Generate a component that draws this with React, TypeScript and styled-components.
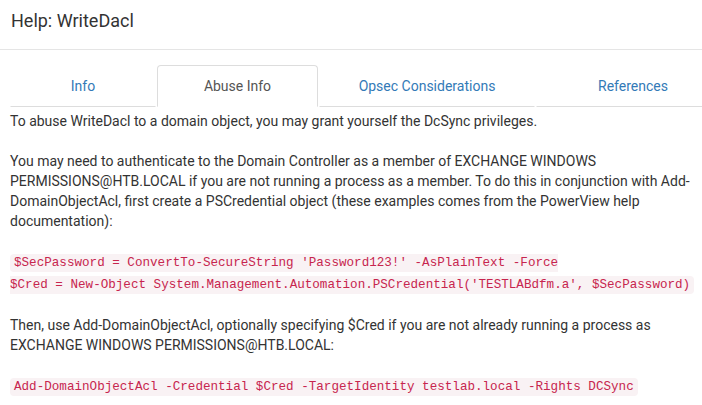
import React from 'react'
import styled, { createGlobalStyle } from 'styled-components'

const GlobalStyle = createGlobalStyle`
  html, body {
    margin: 0;
    padding: 0;
    background: #fff;
    overflow: hidden;
  }
  body {
    font-family: Roboto, "Liberation Sans", sans-serif;
    font-size: 14px;
    line-height: 1.42857143;
    color: #333;
  }
`

const Modal = styled.div`
  width: 750px;
  margin: -7px 0 0 -5px;
  background: #fff;
`

const Header = styled.div`
  padding: 15px 16px;
  border-bottom: 1px solid #e5e5e5;
`

const Title = styled.h4`
  margin: 0;
  font-size: 18px;
  font-weight: 400;
  line-height: 1.42857143;
  color: #333;
`

const Body = styled.div`
  padding: 15px;
`

const Tabs = styled.ul`
  display: flex;
  margin: 0;
  padding: 0;
  list-style: none;
`

const Tab = styled.li<{ $width: number; $active?: boolean }>`
  flex: 0 0 ${({ $width }) => $width}px;
  margin-right: 1px;
  text-align: center;

  a {
    display: block;
    padding: 10px 15px;
    line-height: 20px;
    text-decoration: none;
    border: 1px solid ${({ $active }) => ($active ? '#ddd' : 'transparent')};
    border-bottom-color: ${({ $active }) => ($active ? '#fff' : '#ddd')};
    border-radius: 4px 4px 0 0;
    color: ${({ $active }) => ($active ? '#555' : '#337ab7')};
    background: #fff;
  }
`

const Content = styled.div`
  width: 692px;
  padding-top: 4px;
`

const Code = styled.code`
  padding: 2px 4px;
  font-family: "Liberation Mono", Menlo, Consolas, monospace;
  font-size: 90%;
  color: #c7254e;
  background-color: #f9f2f4;
  border-radius: 4px;
`

const tabs = [
  { label: 'Info', width: 146 },
  { label: 'Abuse Info', width: 161, active: true },
  { label: 'Opsec Considerations', width: 216 },
  { label: 'References', width: 194 },
]

export default function App() {
  return (
    <>
      <GlobalStyle />
      <Modal>
        <Header>
          <Title>Help: WriteDacl</Title>
        </Header>
        <Body>
          <Tabs>
            {tabs.map((t) => (
              <Tab key={t.label} $width={t.width} $active={t.active}>
                <a href="#">{t.label}</a>
              </Tab>
            ))}
          </Tabs>
          <Content>
            To abuse WriteDacl to a domain object, you may grant yourself the DcSync privileges.
            <br />
            <br />
            You may need to authenticate to the Domain Controller as a member of EXCHANGE WINDOWS
            PERMISSIONS@HTB.LOCAL if you are not running a process as a member. To do this in
            conjunction with Add-DomainObjectAcl, first create a PSCredential object (these
            examples comes from the PowerView help documentation):
            <br />
            <br />
            <Code>
              $SecPassword = ConvertTo-SecureString 'Password123!' -AsPlainText -Force
              <br />
              $Cred = New-Object System.Management.Automation.PSCredential('TESTLABdfm.a',
              $SecPassword)
            </Code>
            <br />
            <br />
            Then, use Add-DomainObjectAcl, optionally specifying $Cred if you are not already
            running a process as EXCHANGE WINDOWS PERMISSIONS@HTB.LOCAL:
            <br />
            <br />
            <Code>
              Add-DomainObjectAcl -Credential $Cred -TargetIdentity testlab.local -Rights DCSync
            </Code>
          </Content>
        </Body>
      </Modal>
    </>
  )
}
